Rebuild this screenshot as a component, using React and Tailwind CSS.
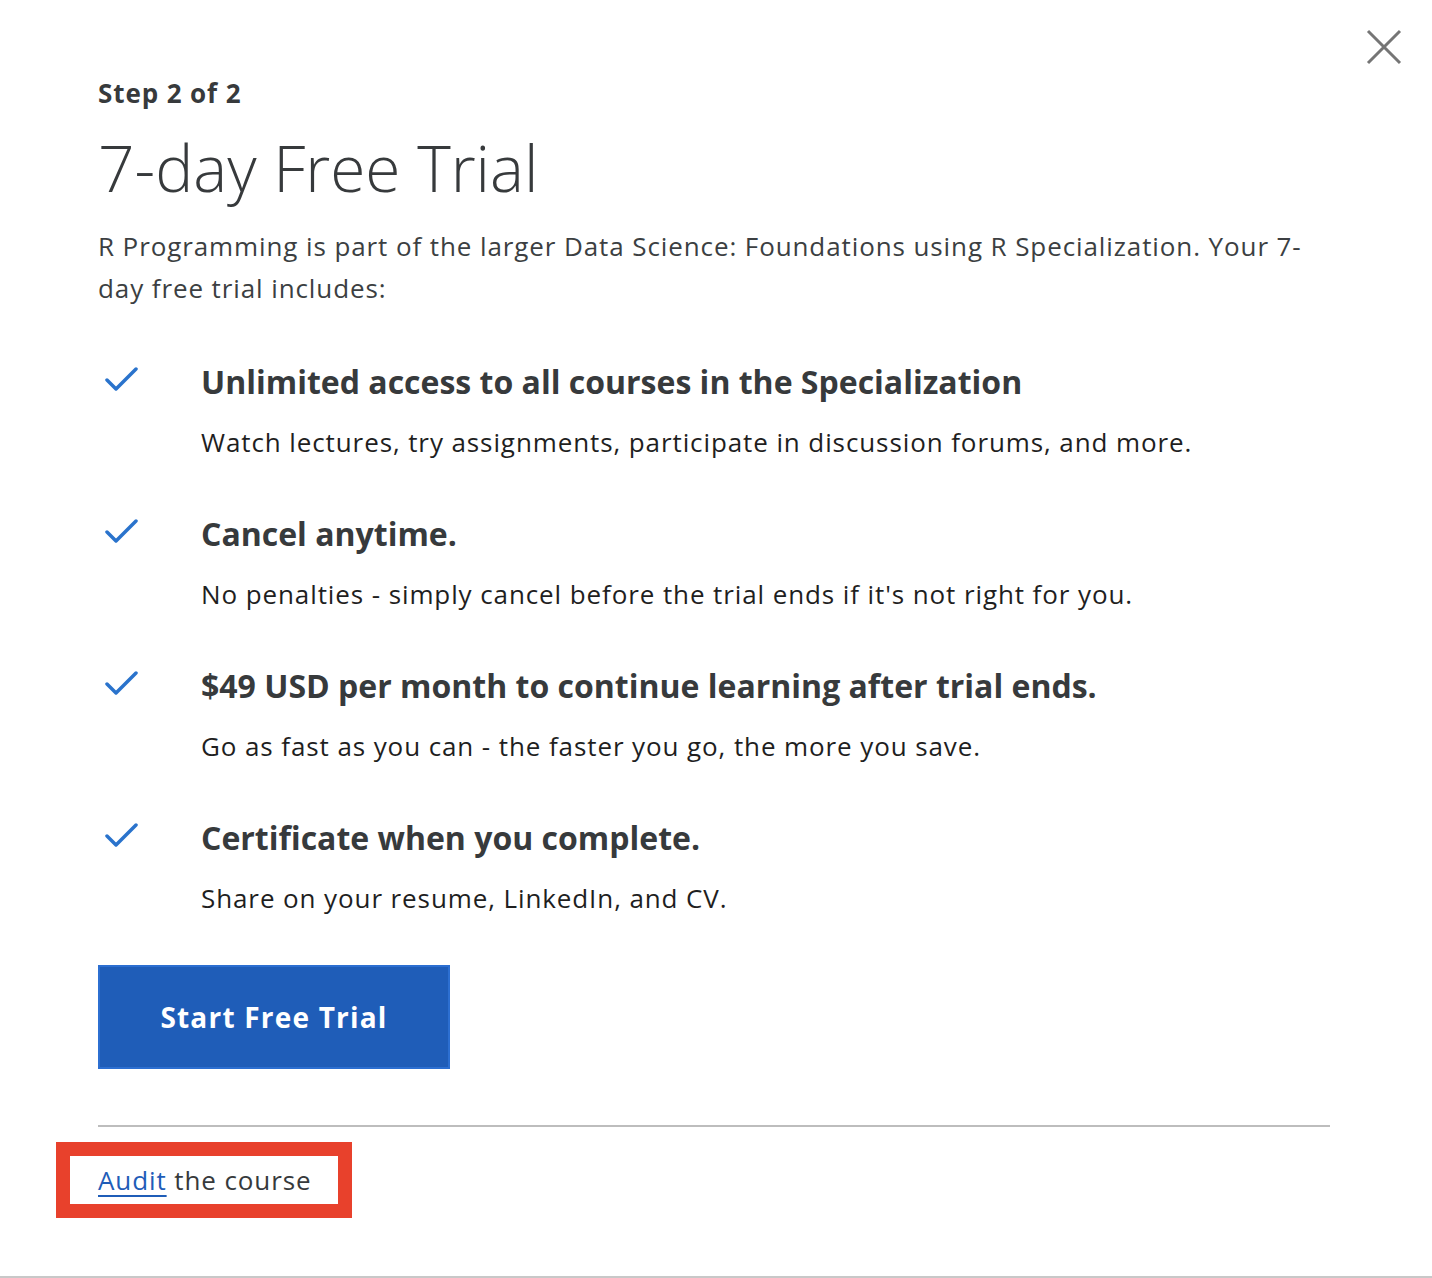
import { useState } from "react";

const items = [
  {
    title: "Unlimited access to all courses in the Specialization",
    text: "Watch lectures, try assignments, participate in discussion forums, and more.",
  },
  {
    title: "Cancel anytime.",
    text: "No penalties - simply cancel before the trial ends if it's not right for you.",
  },
  {
    title: "$49 USD per month to continue learning after trial ends.",
    text: "Go as fast as you can - the faster you go, the more you save.",
  },
  {
    title: "Certificate when you complete.",
    text: "Share on your resume, LinkedIn, and CV.",
  },
];

const Check = () => (
  <svg width="34" height="28" viewBox="0 0 34 28" fill="none" className="shrink-0">
    <path d="M2 14 L11 23 L31 3" stroke="#2a73cc" strokeWidth="3.5" strokeLinecap="round" strokeLinejoin="round" />
  </svg>
);

const App = () => {
  const [open] = useState(true);
  if (!open) return null;

  return (
    <div className="relative w-[1432px] h-[1278px] bg-white border-b-2 border-[#c8c8c8] text-[#373a3c]" style={{ fontFamily: '"Open Sans", sans-serif' }}>
      {/* close button */}
      <button className="absolute right-[30px] top-[29px] p-0">
        <svg width="36" height="36" viewBox="0 0 36 36">
          <path d="M2 2 L34 34 M34 2 L2 34" stroke="#757575" strokeWidth="3" />
        </svg>
      </button>

      <div className="pl-[98px] pr-[102px] pt-[74px]">
        <p className="text-[26px] leading-[38px] font-bold tracking-[0.9px]">Step 2 of 2</p>
        <h1 className="mt-[18px] text-[64px] leading-[76px] font-light">7-day Free Trial</h1>
        <p className="mt-[19px] text-[26px] leading-[42px] tracking-[0.9px] text-[#3c3f42]">
          R Programming is part of the larger Data Science: Foundations using R Specialization. Your 7-day free trial includes:
        </p>

        <ul className="mt-[53px] flex flex-col gap-[60px]">
          {items.map((item) => (
            <li key={item.title} className="flex">
              <div className="w-[103px] pl-[7px] pt-[4px]">
                <Check />
              </div>
              <div>
                <p className="text-[32px] leading-[40px] font-bold">{item.title}</p>
                <p className="mt-[28px] text-[26px] leading-[24px] tracking-[0.9px] text-[#1f1f1f]">{item.text}</p>
              </div>
            </li>
          ))}
        </ul>

        <button className="mt-[55px] w-[352px] h-[104px] bg-[#1f5db8] border-2 border-[#2c6fd1] text-white text-[28px] font-bold tracking-[1.2px]">
          Start Free Trial
        </button>

        <div className="mt-[56px] h-[2px] bg-[#bdbdbd]" />
      </div>

      <div className="ml-[56px] mt-[15px] w-[296px] h-[76px] border-[14px] border-[#e8412c] flex items-center pl-[28px]">
        <p className="text-[26px] leading-[32px] tracking-[0.9px]">
          <a href="#" className="text-[#1f5db8] underline underline-offset-[5px]">Audit</a> the course
        </p>
      </div>
    </div>
  );
};

export default App;
